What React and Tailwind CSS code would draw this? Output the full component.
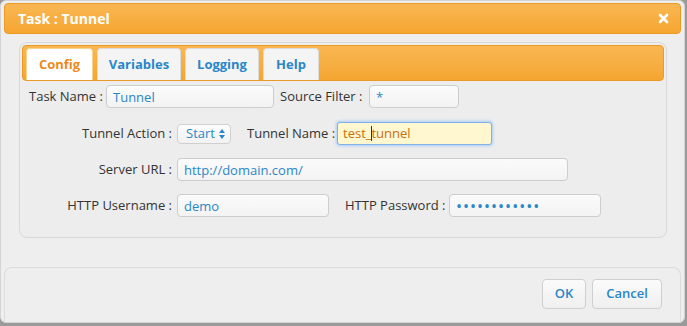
import React from "react";

const font = { fontFamily: '"Open Sans", "Noto Sans", Arial, sans-serif' };

function Field({ value, width, type = "text", extra = "text-[13px]" }) {
  return (
    <input
      readOnly
      type={type}
      value={value}
      className={`${width} ${extra} h-[23px] shrink-0 rounded-[4px] border border-[#cdcdcd] bg-gradient-to-b from-[#fbfbfb] to-[#f3f3f3] px-[6px] text-[#2a86c8] outline-none`}
    />
  );
}

function Tab({ label, active }) {
  return (
    <div
      className={
        active
          ? "flex h-[32px] w-[67px] items-center justify-center rounded-t-[4px] border border-b-0 border-[#f6d38f] bg-white text-[13px] font-bold text-[#ec8a1b]"
          : "flex h-[32px] items-center justify-center rounded-t-[4px] border border-b-0 border-[#dcdcdc] bg-[#f4f4f4] text-[13px] font-bold text-[#2a86c8]"
      }
    >
      {label}
    </div>
  );
}

export default function App() {
  return (
    <div className="h-[326px] w-[687px] overflow-hidden bg-[#9a9a9a]" style={font}>
      <div className="flex h-[323px] w-[685px] flex-col rounded-[6px] border border-[#d4d4d4] bg-[#eeeeee] px-[3px] pt-[2px]">
        {/* title bar */}
        <div className="flex h-[31px] shrink-0 items-center justify-between rounded-[4px] border border-[#eb9a26] bg-gradient-to-b from-[#f9b752] to-[#f5a630] pl-[13px] pr-[11px]">
          <span className="text-[14px] font-bold text-white">Task : Tunnel</span>
          <svg width="11" height="11" viewBox="0 0 11 11">
            <path d="M2 2 L9 9 M9 2 L2 9" stroke="white" strokeWidth="2.6" strokeLinecap="round" />
          </svg>
        </div>

        {/* content panel */}
        <div className="ml-[15px] mr-[14px] mt-[8px] h-[196px] shrink-0 rounded-[8px] border border-[#d9d9d9] bg-[#ededed] p-[2px]">
          <div className="flex h-[36px] items-end gap-[4px] rounded-[4px] border border-[#eb9a26] bg-gradient-to-b from-[#f9b752] to-[#f5a630] pl-[3px]">
            <Tab label="Config" active />
            <div className="w-[84px]"><Tab label="Variables" /></div>
            <div className="w-[74px]"><Tab label="Logging" /></div>
            <div className="w-[56px]"><Tab label="Help" /></div>
          </div>

          <div className="flex flex-col gap-[13px] text-[13px] text-[#333333]">
            {/* row 1 */}
            <div className="mt-[4px] flex h-[23px] items-center pl-[7px]">
              <span className="w-[72px] whitespace-nowrap">Task Name :</span>
              <div className="ml-[5px]"><Field value="Tunnel" width="w-[168px]" /></div>
              <span className="ml-[6px] w-[84px] whitespace-nowrap">Source Filter :</span>
              <div className="ml-[5px]"><Field value="*" width="w-[90px]" /></div>
            </div>

            {/* row 2 */}
            <div className="mt-[1px] flex h-[23px] items-center">
              <span className="w-[150px] whitespace-nowrap text-right">Tunnel Action :</span>
              <div className="ml-[5px] flex h-[20px] w-[54px] items-center justify-between rounded-[4px] border border-[#d0d0d0] bg-gradient-to-b from-[#fdfdfd] to-[#f2f2f2] pl-[8px] pr-[5px] text-[#2a86c8]">
                <span>Start</span>
                <svg width="6" height="10" viewBox="0 0 6 10">
                  <path d="M3 0 L6 4 L0 4 Z M3 10 L6 6 L0 6 Z" fill="#2a86c8" />
                </svg>
              </div>
              <span className="ml-[16px] w-[86px] whitespace-nowrap">Tunnel Name :</span>
              <div className="ml-[4px] flex h-[23px] w-[155px] items-center rounded-[3px] border border-[#7fb2ea] bg-[#fff7cf] px-[5px] text-[#c8700c] shadow-[0_0_3px_1px_#a9cdf3]">
                test_
                <span className="-mr-[1px] inline-block h-[15px] w-[1px] bg-[#333]" />
                tunnel
              </div>
            </div>

            {/* row 3 */}
            <div className="flex h-[23px] items-center">
              <span className="w-[150px] whitespace-nowrap text-right">Server URL :</span>
              <div className="ml-[5px]"><Field value="http://domain.com/" width="w-[391px]" /></div>
            </div>

            {/* row 4 */}
            <div className="flex h-[23px] items-center">
              <span className="w-[150px] whitespace-nowrap text-right">HTTP Username :</span>
              <div className="ml-[5px]"><Field value="demo" width="w-[152px]" /></div>
              <span className="ml-[16px] w-[99px] whitespace-nowrap">HTTP Password :</span>
              <div className="ml-[5px]">
                <Field value="xxxxxxxxxxxx" type="password" width="w-[152px]" extra="text-[16px] tracking-[1px]" />
              </div>
            </div>
          </div>
        </div>

        {/* footer */}
        <div className="mt-[29px] flex flex-1 items-start justify-end gap-[6px] rounded-t-[8px] border border-b-0 border-[#dcdcdc] pr-[18px] pt-[11px]">
          <button className="h-[30px] w-[44px] rounded-[4px] border border-[#cfcfcf] bg-gradient-to-b from-[#fbfbfb] to-[#efefef] text-[13px] font-semibold text-[#2a86c8]">
            OK
          </button>
          <button className="h-[30px] w-[70px] rounded-[4px] border border-[#cfcfcf] bg-gradient-to-b from-[#fbfbfb] to-[#efefef] text-[13px] font-semibold text-[#2a86c8]">
            Cancel
          </button>
        </div>
      </div>
    </div>
  );
}
